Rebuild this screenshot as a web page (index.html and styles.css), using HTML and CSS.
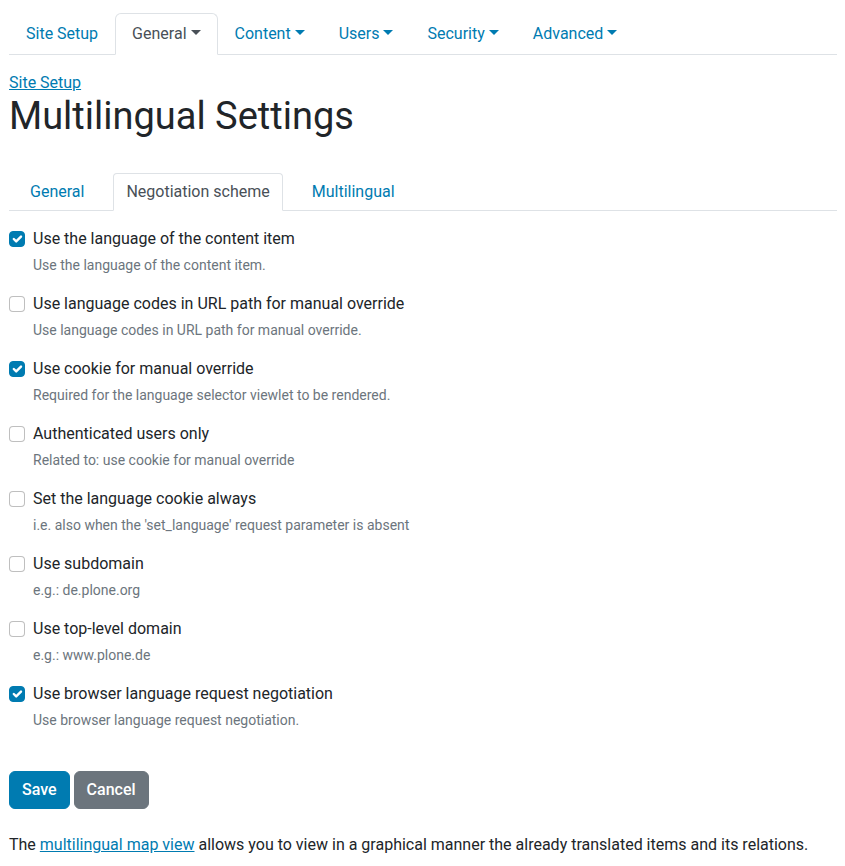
FILE: index.html
```html
<!DOCTYPE html>
<html lang="en">
<head>
<meta charset="utf-8">
<title>Multilingual Settings</title>
<link rel="stylesheet" href="styles.css">
</head>
<body>
<div class="page">
  <ul class="nav-tabs main-nav">
    <li><a class="nav-link" href="#">Site Setup</a></li>
    <li><a class="nav-link active toggle" href="#">General</a></li>
    <li><a class="nav-link toggle" href="#">Content</a></li>
    <li><a class="nav-link toggle" href="#">Users</a></li>
    <li><a class="nav-link toggle" href="#">Security</a></li>
    <li><a class="nav-link toggle" href="#">Advanced</a></li>
  </ul>

  <div class="crumb"><a href="#">Site Setup</a></div>
  <h1 class="title">Multilingual Settings</h1>

  <ul class="nav-tabs sub-nav">
    <li><a class="sub-link" href="#">General</a></li>
    <li><a class="sub-link active" href="#">Negotiation scheme</a></li>
    <li><a class="sub-link" href="#">Multilingual</a></li>
  </ul>

  <form class="fields">
    <div class="field">
      <div class="check"><span class="box on"><svg viewBox="0 0 20 20" width="16" height="16"><path d="m6 10 3 3 6-6" fill="none" stroke="#fff" stroke-width="3" stroke-linecap="round" stroke-linejoin="round"/></svg></span><span class="label">Use the language of the content item</span></div>
      <div class="help">Use the language of the content item.</div>
    </div>
    <div class="field">
      <div class="check"><span class="box"></span><span class="label">Use language codes in URL path for manual override</span></div>
      <div class="help">Use language codes in URL path for manual override.</div>
    </div>
    <div class="field">
      <div class="check"><span class="box on"><svg viewBox="0 0 20 20" width="16" height="16"><path d="m6 10 3 3 6-6" fill="none" stroke="#fff" stroke-width="3" stroke-linecap="round" stroke-linejoin="round"/></svg></span><span class="label">Use cookie for manual override</span></div>
      <div class="help">Required for the language selector viewlet to be rendered.</div>
    </div>
    <div class="field">
      <div class="check"><span class="box"></span><span class="label">Authenticated users only</span></div>
      <div class="help">Related to: use cookie for manual override</div>
    </div>
    <div class="field">
      <div class="check"><span class="box"></span><span class="label">Set the language cookie always</span></div>
      <div class="help">i.e. also when the 'set_language' request parameter is absent</div>
    </div>
    <div class="field">
      <div class="check"><span class="box"></span><span class="label">Use subdomain</span></div>
      <div class="help">e.g.: de.plone.org</div>
    </div>
    <div class="field">
      <div class="check"><span class="box"></span><span class="label">Use top-level domain</span></div>
      <div class="help">e.g.: www.plone.de</div>
    </div>
    <div class="field">
      <div class="check"><span class="box on"><svg viewBox="0 0 20 20" width="16" height="16"><path d="m6 10 3 3 6-6" fill="none" stroke="#fff" stroke-width="3" stroke-linecap="round" stroke-linejoin="round"/></svg></span><span class="label">Use browser language request negotiation</span></div>
      <div class="help">Use browser language request negotiation.</div>
    </div>

    <div class="buttons">
      <button type="button" class="btn btn-primary">Save</button>
      <button type="button" class="btn btn-secondary">Cancel</button>
    </div>
  </form>

  <p class="note">The <a href="#">multilingual map view</a> allows you to view in a graphical manner the already translated items and its relations.</p>
</div>
</body>
</html>
```

FILE: styles.css
```css
html, body {
  margin: 0;
  padding: 0;
  background: #fff;
}
body {
  font-family: Roboto, "Liberation Sans", sans-serif;
  font-size: 16px;
  line-height: 24px;
  color: #212529;
}
a {
  color: #007bb1;
}
.page {
  padding: 13px 8px 0 9px;
}
.nav-tabs {
  list-style: none;
  margin: 0;
  padding: 0;
  display: flex;
  border-bottom: 1px solid #dee2e6;
}
.nav-link {
  display: block;
  padding: 8px 16px;
  border: 1px solid transparent;
  border-top-left-radius: 6px;
  border-top-right-radius: 6px;
  margin-bottom: -1px;
  text-decoration: none;
  color: #007bb1;
}
.nav-link.active {
  color: #495057;
  background: #fff;
  border-color: #dee2e6 #dee2e6 #fff;
}
.toggle::after {
  content: "";
  display: inline-block;
  margin-left: 4px;
  vertical-align: 4px;
  border-top: 5px solid;
  border-left: 5px solid transparent;
  border-right: 5px solid transparent;
  border-bottom: 0;
}
.crumb {
  margin-top: 16px;
}
.title {
  margin: 0 0 36px;
  font-size: 38px;
  line-height: 42px;
  font-weight: 400;
}
.sub-nav li {
  margin-right: 16px;
}
.sub-nav li:first-child {
  margin-left: 8px;
}
.sub-link {
  display: block;
  padding: 6px 12px;
  border: 1px solid transparent;
  border-top-left-radius: 4px;
  border-top-right-radius: 4px;
  margin-bottom: -1px;
  text-decoration: none;
  color: #007bb1;
}
.sub-link.active {
  color: #495057;
  background: #fff;
  border-color: #dee2e6 #dee2e6 #fff;
}
.fields {
  margin-top: 16px;
}
.field {
  margin-bottom: 16px;
}
.check {
  display: flex;
  align-items: flex-start;
}
.box {
  flex: none;
  width: 16px;
  height: 16px;
  box-sizing: border-box;
  margin-top: 4px;
  margin-right: 8px;
  border: 1px solid rgba(0, 0, 0, 0.25);
  border-radius: 4px;
  background: #fff;
  position: relative;
}
.box.on {
  background: #007bb1;
  border-color: #007bb1;
}
.box svg {
  position: absolute;
  left: -1px;
  top: -1px;
}
.help {
  margin-top: 4px;
  padding-left: 24px;
  font-size: 14px;
  line-height: 21px;
  color: #6c757d;
}
.buttons {
  margin-top: 40px;
  display: flex;
  gap: 4px;
}
.btn {
  font-family: inherit;
  font-size: 16px;
  line-height: 24px;
  font-weight: 500;
  padding: 6px 12px;
  border: 1px solid transparent;
  border-radius: 6px;
  color: #fff;
  cursor: pointer;
}
.btn-primary {
  background: #007bb1;
  border-color: #007bb1;
}
.btn-secondary {
  background: #6c757d;
  border-color: #6c757d;
}
.note {
  margin: 24px 0 0;
}
```
